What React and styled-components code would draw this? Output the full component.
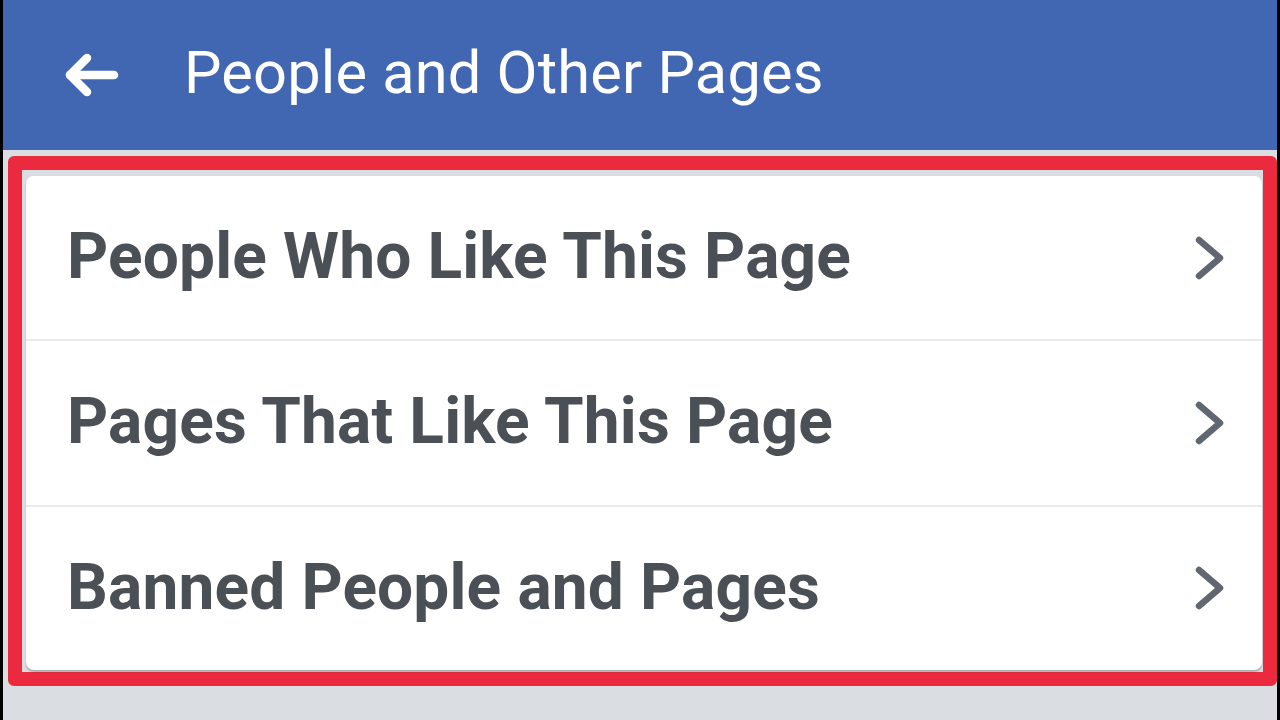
import React from 'react'
import styled, { createGlobalStyle } from 'styled-components'

const GlobalStyle = createGlobalStyle`
    html, body {
        margin: 0;
        padding: 0;
        background: #000;
    }
    body {
        font-family: Roboto, "Liberation Sans", Arial, sans-serif;
    }
`

const Screen = styled.div`
    width: 1274px;
    height: 720px;
    margin: 0 3px;
    background: #dadde1;
    display: flex;
    flex-direction: column;
    overflow: hidden;
`

const Header = styled.header`
    height: 150px;
    background: #4267b2;
    display: flex;
    align-items: center;
    padding-left: 59px;
    gap: 64px;
    flex-shrink: 0;
`

const Title = styled.h1`
    margin: 0 0 4px;
    color: #fff;
    font-weight: 400;
    font-size: 59.5px;
    letter-spacing: 0.2px;
`

const Highlight = styled.div`
    margin: 6px 0 0 5px;
    width: 1269px;
    height: 530px;
    box-sizing: border-box;
    border: 14px solid #ec2a3f;
    border-radius: 6px;
    padding: 6px 1px 2px 4px;
`

const Card = styled.div`
    background: #fff;
    border-radius: 8px;
    box-shadow: 0 2px 2px rgba(0, 0, 0, 0.22);
    display: flex;
    flex-direction: column;
    height: 100%;
    overflow: hidden;
`

const Row = styled.div`
    flex: 1;
    display: flex;
    align-items: center;
    justify-content: space-between;
    padding: 0 36px 0 41px;
    border-top: ${p => (p.first ? 'none' : '2px solid #e9eaed')};
`

const Label = styled.span`
    color: #4b4f56;
    font-weight: 700;
    font-size: 64px;
    letter-spacing: 0.15px;
    margin-bottom: 2px;
`

const BackArrow = () => (
    <svg width="58" height="48" viewBox="0 0 58 48">
        <g fill="none" stroke="#fff" strokeWidth="8.5" strokeLinecap="round" strokeLinejoin="round">
            <path d="M8 24H52" />
            <path d="M25 7L8 24L25 41" />
        </g>
    </svg>
)

const Chevron = () => (
    <svg width="32" height="44" viewBox="0 0 32 44">
        <path d="M5 4L26 22L5 40" fill="none" stroke="#606770" strokeWidth="6.5" strokeLinecap="round" strokeLinejoin="round" />
    </svg>
)

const items = ['People Who Like This Page', 'Pages That Like This Page', 'Banned People and Pages']

export default function App() {
    return (
        <>
            <GlobalStyle />
            <Screen>
                <Header>
                    <BackArrow />
                    <Title>People and Other Pages</Title>
                </Header>
                <Highlight>
                    <Card>
                        {items.map((item, index) => (
                            <Row key={item} first={index === 0}>
                                <Label>{item}</Label>
                                <Chevron />
                            </Row>
                        ))}
                    </Card>
                </Highlight>
            </Screen>
        </>
    )
}
